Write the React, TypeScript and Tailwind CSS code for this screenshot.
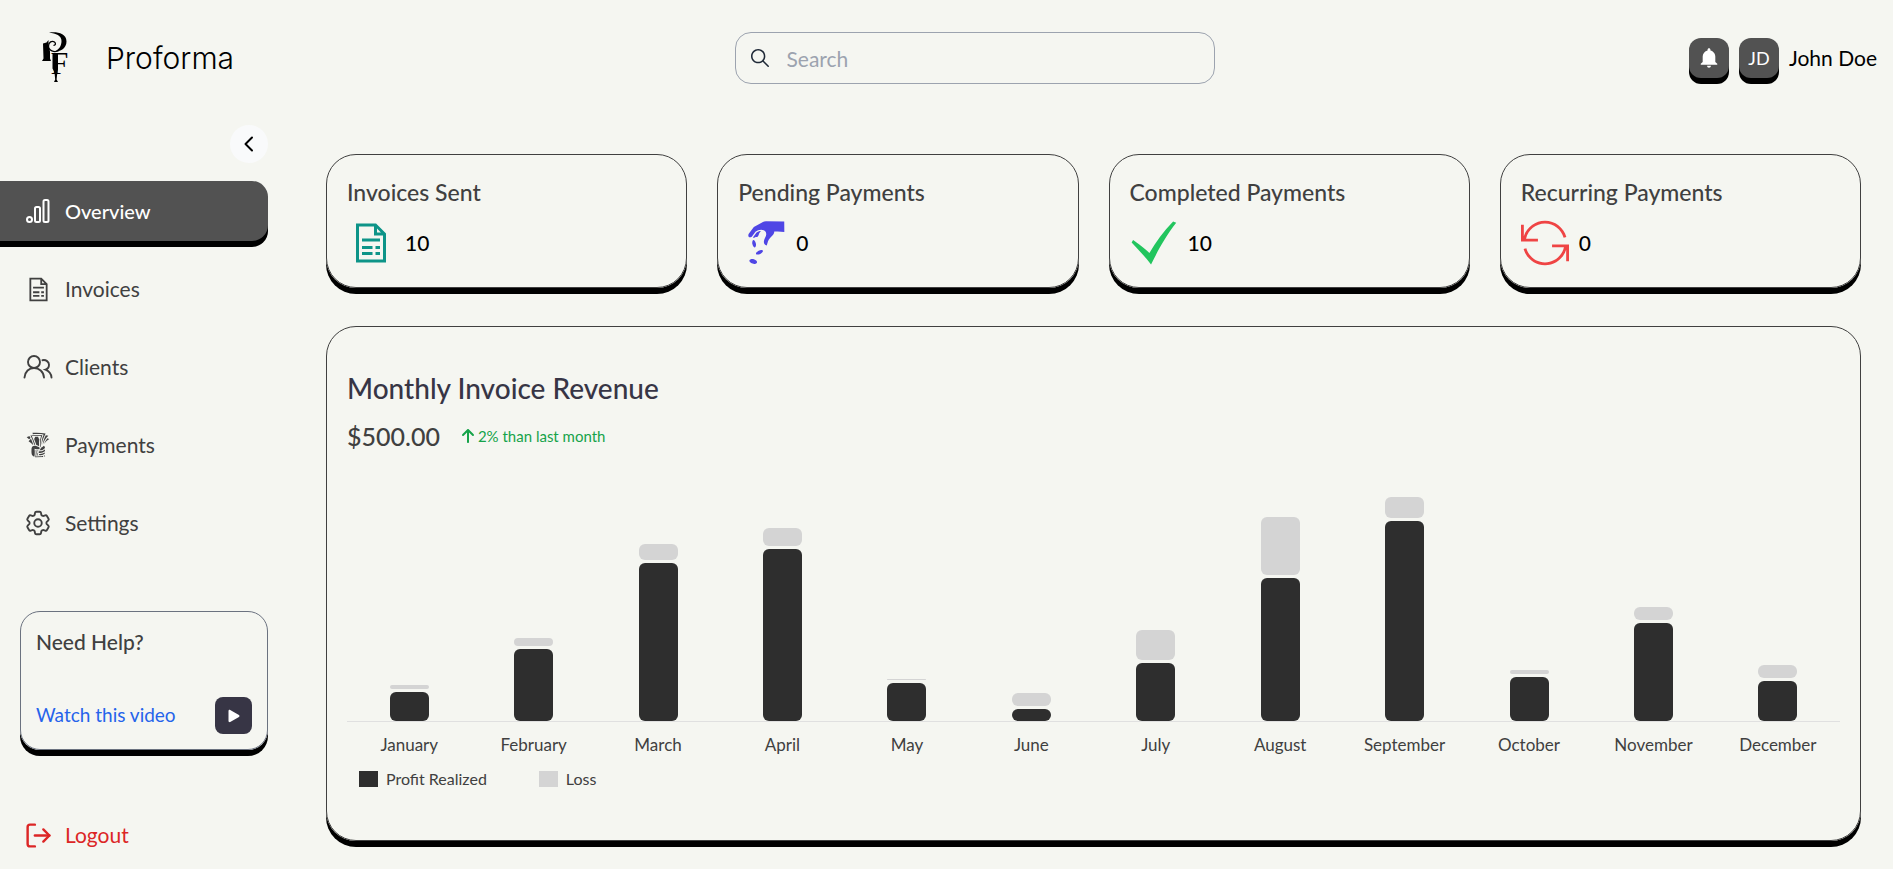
import type { ReactNode } from "react";
import { GiCheckMark, GiPayMoney, GiTakeMyMoney } from "react-icons/gi";
import { LiaFileInvoiceSolid } from "react-icons/lia";
import { TfiReload } from "react-icons/tfi";
import { HiOutlineCog6Tooth } from "react-icons/hi2";
import { LuLogOut } from "react-icons/lu";
import { IoIosSearch, IoMdNotifications } from "react-icons/io";
import { BsPlayFill } from "react-icons/bs";
import { FaArrowUp } from "react-icons/fa6";

function Logo() {
  return (
    <svg viewBox="0 0 28 52" className="h-[52px] w-7" aria-hidden="true">
      <path d="M7 .7C14 -.5 24.500 1 24.500 9.500C24.500 16.500 18 20 11 20C17 18 19.500 14 19.500 9C19.500 3.500 14 1.300 7 .7Z" />
      <path d="M17 18.500C12 21 6.500 18.500 6.500 14C6.500 10 10 8.300 12.500 10C14.200 11.500 13.500 13.500 11.500 13.300" fill="none" stroke="#000" strokeWidth="1.300" />
      <path d="M1 11.500L4.500 10.500L6.500 8L6.500 13.500L8 19.500V26.500L9 29H0L1.500 26.500Z" />
      <text x="8.500" y="41.500" fontSize="32" fontFamily="Liberation Serif, serif">F</text>
      <path d="M10.500 21.500H16V37.500L15 43.500L14.600 47.500L16 50H12L13.200 47.500L12.500 40.500L10.500 36.500Z" />
    </svg>
  );
}

function StatsIcon() {
  return (
    <svg viewBox="0 0 26 26" className="size-[26px]" fill="none" stroke="currentColor" strokeWidth="2" aria-hidden="true">
      <circle cx="4.500" cy="21.500" r="2.500" />
      <rect x="10" y="9" width="5" height="15" rx="1.500" />
      <rect x="18.500" y="2" width="5" height="22" rx="1.500" />
    </svg>
  );
}

function ClientsIcon() {
  return (
    <svg viewBox="0 0 30 26" className="h-[26px] w-[30px]" fill="none" stroke="currentColor" strokeWidth="1.900" strokeLinecap="round" aria-hidden="true">
      <circle cx="11" cy="8" r="6" />
      <path d="M1.500 23.500C2 17.500 6 14 11 14S20.500 17.500 21 23.500" />
      <path d="M19.500 6.200C23 5.500 26 7.800 26 10.800C26 13.300 24.500 15 22.500 15.600C26 17 28.200 19.500 28.500 23.500" />
    </svg>
  );
}

function ChevronIcon() {
  return (
    <svg viewBox="0 0 12 16" className="h-4 w-3" fill="none" stroke="#000" strokeWidth="2" strokeLinecap="round" strokeLinejoin="round" aria-hidden="true">
      <path d="M9 1.500L2.500 8L9 14.500" />
    </svg>
  );
}

const navItems: { label: string; icon: ReactNode; active?: boolean }[] = [
  { label: "Overview", icon: <StatsIcon />, active: true },
  { label: "Invoices", icon: <LiaFileInvoiceSolid size={29} /> },
  { label: "Clients", icon: <ClientsIcon /> },
  { label: "Payments", icon: <GiTakeMyMoney size={28} /> },
  { label: "Settings", icon: <HiOutlineCog6Tooth size={30} /> },
];

const stats: { label: string; value: number; icon: ReactNode }[] = [
  { label: "Invoices Sent", value: 10, icon: <LiaFileInvoiceSolid size={48} className="text-[#0d9488]" /> },
  { label: "Pending Payments", value: 0, icon: <GiPayMoney size={48} className="text-[#4f46e5]" /> },
  { label: "Completed Payments", value: 10, icon: <GiCheckMark size={48} className="text-[#22c55e]" /> },
  { label: "Recurring Payments", value: 0, icon: <TfiReload size={48} className="text-[#ef4444]" /> },
];

const months = [
  { name: "January", profit: 29, loss: 4 },
  { name: "February", profit: 72, loss: 8 },
  { name: "March", profit: 158, loss: 16 },
  { name: "April", profit: 172, loss: 18 },
  { name: "May", profit: 38, loss: 1 },
  { name: "June", profit: 12, loss: 13 },
  { name: "July", profit: 58, loss: 30 },
  { name: "August", profit: 143, loss: 58 },
  { name: "September", profit: 200, loss: 21 },
  { name: "October", profit: 44, loss: 4 },
  { name: "November", profit: 98, loss: 13 },
  { name: "December", profit: 40, loss: 13 },
];

function Header() {
  return (
    <header className="flex items-center pt-8 pb-[41px]">
      <div className="flex w-[268px] shrink-0 items-center gap-9 pl-[42px]">
        <Logo />
        <span className="font-['Inter',sans-serif] text-[30px] leading-10 font-light text-black">Proforma</span>
      </div>
      <div className="flex flex-1 justify-center">
        <label className="flex w-[480px] items-center gap-[15px] rounded-2xl border border-[#9ca3af] px-3">
          <IoIosSearch size={24} className="text-[#1f2937]" />
          <input type="search" aria-label="Search" placeholder="Search" className="h-[50px] min-w-0 flex-1 bg-transparent text-[21px] outline-none placeholder:text-[#9ca3af]" />
        </label>
      </div>
      <div className="flex w-[212px] shrink-0 items-center justify-end gap-2.5 pr-4">
        <button aria-label="Notifications" className="flex size-10 items-center justify-center rounded-xl bg-[#525252] text-white shadow-[0_6px_0_#000]">
          <IoMdNotifications size={24} />
        </button>
        <button aria-label="Profile" className="flex size-10 items-center justify-center rounded-xl bg-[#525252] text-lg text-white shadow-[0_6px_0_#000]">JD</button>
        <span className="text-[21px] whitespace-nowrap text-black">John Doe</span>
      </div>
    </header>
  );
}

function Sidebar() {
  return (
    <aside className="w-[268px] shrink-0">
      <div className="flex justify-end">
        <button aria-label="Collapse sidebar" className="flex size-[38px] items-center justify-center rounded-full bg-[#f9fafb]"><ChevronIcon /></button>
      </div>
      <nav className="mt-[18px] flex flex-col gap-[18px]">
        {navItems.map((item) => (
          <a
            key={item.label}
            href="#"
            className={
              item.active
                ? "flex h-[60px] items-center rounded-r-2xl bg-[#525252] pl-[23px] text-[20px] font-medium text-white shadow-[0_6px_0_#000]"
                : "flex h-[60px] items-center pl-[23px] text-[21px] text-[#404040]"
            }
          >
            <span className="mr-3 flex w-[30px] justify-center">{item.icon}</span>
            {item.label}
          </a>
        ))}
      </nav>
      <section className="mt-[58px] ml-5 rounded-[20px] border border-[#6b7280] px-[15px] pt-[14px] pb-[15px] shadow-[0_6px_0_#000]">
        <h2 className="text-[21px] leading-8 font-medium text-[#404040]">Need Help?</h2>
        <div className="mt-[39px] flex items-center justify-between">
          <a href="#" className="text-[19px] text-[#2563eb]">Watch this video</a>
          <button aria-label="Play video" className="flex size-[37px] items-center justify-center rounded-lg bg-[#373545] text-white"><BsPlayFill size={22} /></button>
        </div>
      </section>
      <a href="#" className="mt-[55px] flex h-[60px] items-center pl-[23px] text-[21px] text-[#dc2626]">
        <span className="mr-3 flex w-[30px] justify-center"><LuLogOut size={29} /></span>
        Logout
      </a>
    </aside>
  );
}

function RevenueCard() {
  return (
    <section className="mt-[38px] rounded-[30px] border border-[#404040] px-5 pt-[43px] pb-[49px] shadow-[0_6px_0_#000]">
      <h2 className="text-[28px] leading-9 font-medium text-[#373545]">Monthly Invoice Revenue</h2>
      <div className="mt-3 flex items-center">
        <span className="text-[25px] leading-9 font-medium text-[#404040]">$500.00</span>
        <span className="ml-5 flex items-center gap-0.5 text-[15px] text-[#16a34a]"><FaArrowUp size={16} />2% than last month</span>
      </div>
      <div className="mt-[42px] flex h-[226px] border-b border-[#e0e0e0]">
        {months.map((m) => (
          <div key={m.name} className="flex flex-1 flex-col items-center justify-end gap-[3px]">
            <div className="w-[39px] rounded-md bg-[#d4d4d4]" style={{ height: m.loss }} />
            <div className="w-[39px] rounded-md bg-[#2e2e2e]" style={{ height: m.profit }} />
          </div>
        ))}
      </div>
      <div className="mt-[11px] flex text-[17px] leading-6 text-[#404040]">
        {months.map((m) => (
          <span key={m.name} className="flex-1 text-center">{m.name}</span>
        ))}
      </div>
      <div className="mt-[10px] flex gap-[52px] pl-3 text-base leading-6 text-[#404040]">
        <span className="flex items-center gap-2"><i className="h-4 w-[19px] bg-[#2e2e2e]" />Profit Realized</span>
        <span className="flex items-center gap-2"><i className="h-4 w-[19px] bg-[#d4d4d4]" />Loss</span>
      </div>
    </section>
  );
}

export default function App() {
  return (
    <div className="min-h-screen bg-[#f5f6f1] font-['Lato','Liberation_Sans',sans-serif]">
      <Header />
      <div className="flex">
        <Sidebar />
        <main className="min-w-0 flex-1 pt-[29px] pr-8 pl-[58px]">
          <div className="grid grid-cols-4 gap-[30px]">
            {stats.map((s) => (
              <section key={s.label} className="rounded-[30px] border border-[#404040] px-5 pt-[19px] pb-5 shadow-[0_6px_0_#000]">
                <h2 className="text-[23px] leading-9 font-medium text-[#404040]">{s.label}</h2>
                <div className="mt-[9px] flex items-center gap-2.5 text-[21px] font-medium text-black">{s.icon}{s.value}</div>
              </section>
            ))}
          </div>
          <RevenueCard />
        </main>
      </div>
    </div>
  );
}
